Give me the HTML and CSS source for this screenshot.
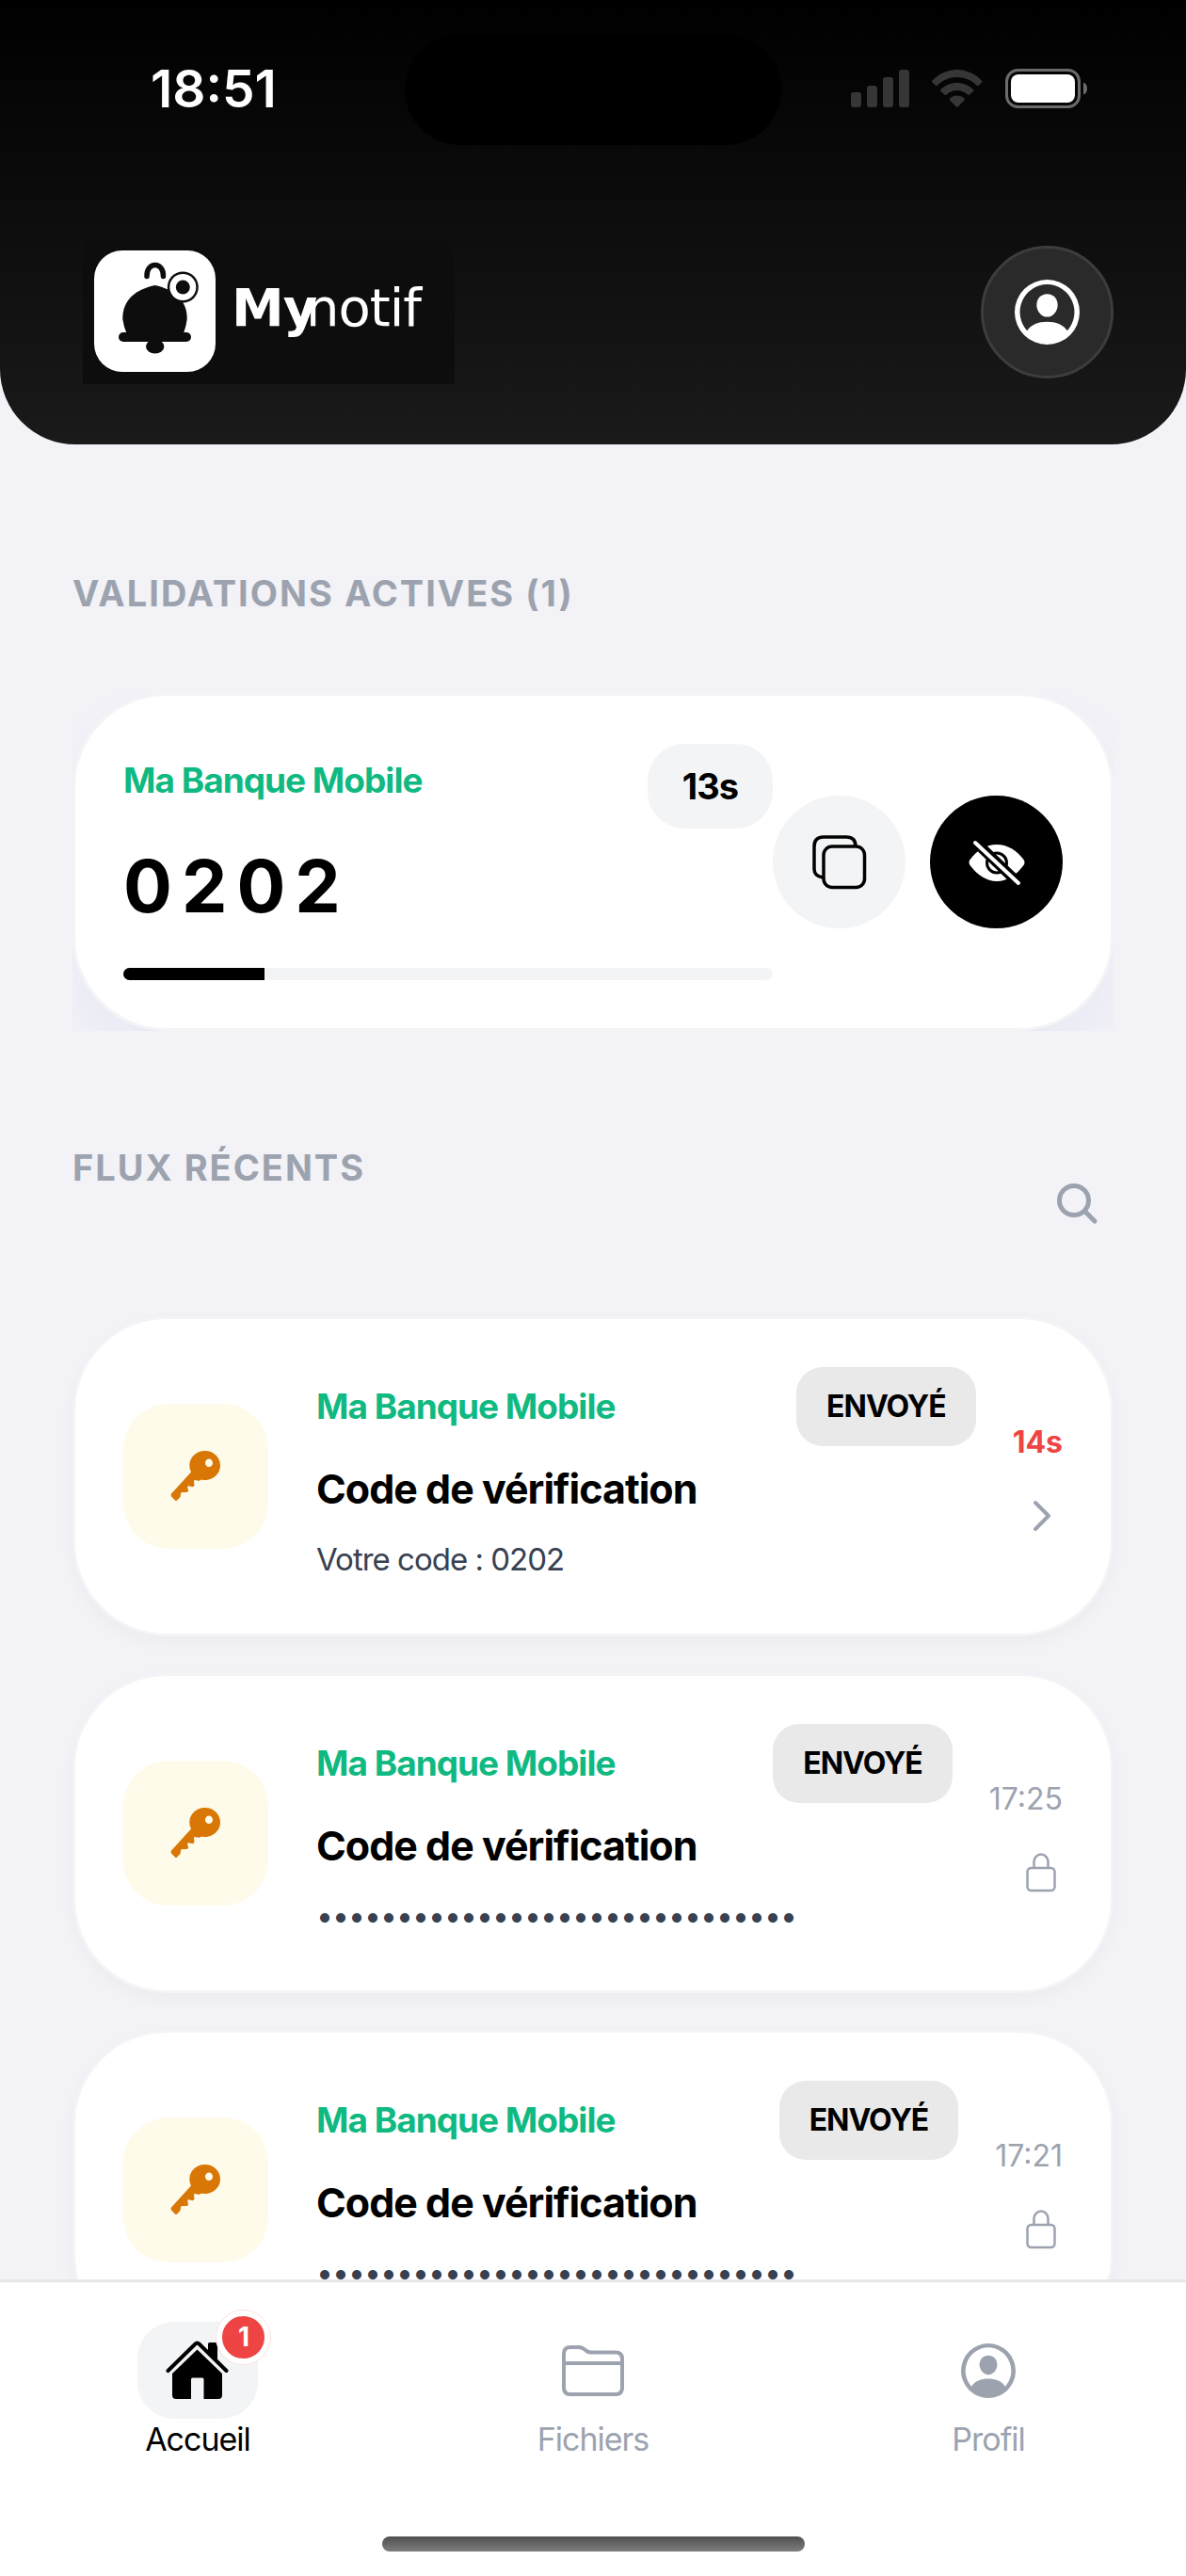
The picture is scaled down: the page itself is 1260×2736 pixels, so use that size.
FILE: index.html
```html
<!DOCTYPE html>
<html lang="fr">
<head>
    <meta charset="UTF-8" />
    <meta name="viewport" content="width=device-width, initial-scale=1.0" />
    <title>Mynotif</title>
    <link rel="stylesheet" href="styles.css">
</head>
<body>
    <!-- icônes partagées -->
    <svg class="sprite" aria-hidden="true">
        <symbol id="icon-profile" viewBox="0 0 68 68">
            <path fill-rule="evenodd" fill="currentColor" d="M34 0a34 34 0 1 1 0 68a34 34 0 1 1 0-68zM34 5a29 29 0 0 0-21 48.500C17 47 25 44 34 44s17 3 21 9.500A29 29 0 0 0 34 5z" />
            <path fill="currentColor" d="M34 15c6.500 0 11 5 11 11.500S40 39 34 39s-11-6-11-12.500S27.500 15 34 15z" />
        </symbol>
        <symbol id="icon-key" viewBox="0 0 54 54">
            <path fill-rule="evenodd" fill="currentColor" d="M37 0a16 15.500 0 1 1-4 30.500c-1 .5-1.500 1.500-3 1.200l-4-.7c-1 0-1 1-1 2l.5 3c0 1.500-1.500 2.500-3 2l-3-.8c-1 0-1.500 1-1.300 1.800l.8 2.500c.3 1.500-1 2.500-2 2.500h-4c-1.500 0-2 .8-2 2l-.5 3l-3.500 3.500q-1 1-2 0l-3.500-3.500q-1.500-1.500-.5-3.500L22 22.500A16 15.500 0 0 1 37 0zM41 8.500a4 4.300 0 1 0 0 8.600a4 4.300 0 1 0 0-8.600z" />
        </symbol>
        <symbol id="icon-lock" viewBox="0 0 46 46">
            <g fill="none" stroke="currentColor" stroke-width="2.500">
                <rect x="8.500" y="18" width="29" height="24" rx="4" />
                <path d="M15.500 18v-6.500a7.500 8 0 0 1 15 0V18" />
            </g>
        </symbol>
    </svg>

    <div class="app">
        <header class="header">
            <div class="status">
                <span class="status-time">18:51</span>
                <span class="island"></span>
                <svg class="status-icons" viewBox="0 0 255 42" aria-hidden="true">
                    <g fill="#363636">
                        <rect x="0" y="25" width="11" height="16" rx="3" />
                        <rect x="17" y="18" width="11" height="23" rx="3" />
                        <rect x="34" y="9" width="11" height="32" rx="3" />
                        <rect x="51" y="1" width="11" height="40" rx="3" />
                        <path d="M86.500 12.500C101 -3 124.500 -3 139 12.500Q140 13.500 139 14.500L135.500 18Q134.500 18.500 133.500 17.500C122 6 103.500 6 92 17.500Q91 18.500 90 18L86.500 14.500Q85.500 13.500 86.500 12.500z" />
                        <path d="M95.500 22C105 12.500 120.500 12.500 130 22Q131 23 130 24L126 27.500Q125 28.500 124 27.500C117.500 21.500 108 21.500 101.500 27.500Q100.500 28.500 99.500 27.500L95.500 24Q94.500 23 95.500 22z" />
                        <path d="M105 31.500C109.500 27.500 116 27.500 120.500 31.500Q121 32.500 120.500 33.500L113.500 40.500Q112.800 41 112 40.500L105 33.500Q104.500 32.500 105 31.500z" />
                    </g>
                    <rect x="165.500" y="1.500" width="77" height="39" rx="12" fill="none" stroke="#6b6b6b" stroke-width="3" />
                    <rect x="170" y="6" width="68" height="30" rx="8" fill="#fff" />
                    <path d="M247 14.500q4 1.500 4 6.500t-4 6.500z" fill="#6b6b6b" />
                </svg>
            </div>
            <div class="brand-row">
                <svg class="logo" viewBox="0 0 395 153" role="img" aria-label="Mynotif">
                    <rect width="395" height="153" fill="#0d0d0d" />
                    <rect x="12" y="11" width="129" height="129" rx="30" fill="#fff" />
                    <path d="M68 38.500C67.500 22.500 86 22.500 85.500 38.500" fill="none" stroke="#0d0d0d" stroke-width="5.500" stroke-linecap="round" />
                    <path d="M76.700 48C58 52 42 62 42.300 84Q43.500 92 46.500 99H107Q110 91 110.700 84C111 62 95 52 76.700 48z" fill="#0d0d0d" />
                    <rect x="38" y="98" width="77" height="10" rx="5" fill="#0d0d0d" />
                    <ellipse cx="76.700" cy="113" rx="9.700" ry="7.500" fill="#0d0d0d" />
                    <circle cx="106.300" cy="50" r="16.500" fill="#0d0d0d" />
                    <circle cx="106.300" cy="50" r="14" fill="#fff" />
                    <circle cx="106.300" cy="50" r="7.500" fill="#0d0d0d" />
                    <text class="logo-bold" x="158" y="91">My</text>
                    <text class="logo-light" x="237" y="91">notif</text>
                </svg>
                <button class="avatar" type="button" aria-label="Profil">
                    <svg><use href="#icon-profile" /></svg>
                </button>
            </div>
        </header>

        <main>
            <section>
                <h2>VALIDATIONS ACTIVES (1)</h2>
                <div class="validation-clip">
                    <article class="validation">
                        <div class="validation-body">
                            <div class="validation-head">
                                <span class="sender">Ma Banque Mobile</span>
                                <span class="timer">13s</span>
                            </div>
                            <p class="code">0202</p>
                            <div class="progress"><div class="progress-bar" style="width: 21.8%"></div></div>
                        </div>
                        <div class="validation-actions">
                            <button class="round" type="button" aria-label="Copier">
                                <svg viewBox="0 0 58 58">
                                    <g fill="none" stroke="#000" stroke-width="3.500">
                                        <path d="M11 45C5 44 2 41 2 36V12Q2 2 12 2H36Q46 2 46 12" />
                                        <rect x="12" y="12" width="43.500" height="43.500" rx="9" />
                                    </g>
                                </svg>
                            </button>
                            <button class="round round-dark" type="button" aria-label="Masquer">
                                <svg viewBox="0 0 62 62">
                                    <path d="M2.500 28C10 18 20 12 31 12s21 6 28.500 16q2 3 0 6C52 44 42 51 31 51S10 44 2.500 34q-2-3 0-6z" fill="#fff" />
                                    <circle cx="31" cy="31.500" r="10.500" fill="#fff" stroke="#000" stroke-width="3" />
                                    <path d="M8 9L54 53" stroke="#000" stroke-width="11" />
                                    <path d="M8 10L54 53" stroke="#fff" stroke-width="4" stroke-linecap="round" />
                                </svg>
                            </button>
                        </div>
                    </article>
                </div>
            </section>

            <section>
                <div class="feed-head">
                    <h2>FLUX RÉCENTS</h2>
                    <button class="search" type="button" aria-label="Rechercher">
                        <svg viewBox="0 0 44 44">
                            <g fill="none" stroke="#9ca3af" stroke-width="5" stroke-linecap="round">
                                <circle cx="18" cy="18" r="15.500" />
                                <path d="M29.500 29.500L40 40" />
                            </g>
                        </svg>
                    </button>
                </div>
                <div class="feed">
                    <article class="item">
                        <div class="item-icon"><svg><use href="#icon-key" /></svg></div>
                        <div class="item-body">
                            <div class="item-head">
                                <span class="sender">Ma Banque Mobile</span>
                                <span class="badge">ENVOYÉ</span>
                            </div>
                            <h3>Code de vérification</h3>
                            <p>Votre code : 0202</p>
                        </div>
                        <div class="item-side">
                            <time class="urgent">14s</time>
                            <svg viewBox="0 0 46 46"><path d="M17 9l14 14l-14 14" fill="none" stroke="currentColor" stroke-width="4" stroke-linecap="round" stroke-linejoin="round" /></svg>
                        </div>
                    </article>
                    <article class="item">
                        <div class="item-icon"><svg><use href="#icon-key" /></svg></div>
                        <div class="item-body">
                            <div class="item-head">
                                <span class="sender">Ma Banque Mobile</span>
                                <span class="badge">ENVOYÉ</span>
                            </div>
                            <h3>Code de vérification</h3>
                            <p class="masked">••••••••••••••••••••••••••••••</p>
                        </div>
                        <div class="item-side">
                            <time>17:25</time>
                            <svg><use href="#icon-lock" /></svg>
                        </div>
                    </article>
                    <article class="item">
                        <div class="item-icon"><svg><use href="#icon-key" /></svg></div>
                        <div class="item-body">
                            <div class="item-head">
                                <span class="sender">Ma Banque Mobile</span>
                                <span class="badge">ENVOYÉ</span>
                            </div>
                            <h3>Code de vérification</h3>
                            <p class="masked">••••••••••••••••••••••••••••••</p>
                        </div>
                        <div class="item-side">
                            <time>17:21</time>
                            <svg><use href="#icon-lock" /></svg>
                        </div>
                    </article>
                </div>
            </section>
        </main>

        <nav class="tabs">
            <a class="tab active" href="#accueil">
                <span class="tab-icon">
                    <svg class="icon-home" viewBox="0 0 68 66">
                        <path d="M45 4.500q0-1.500 1.500-1.500h7q1.500 0 1.500 1.500V23L45 14z" fill="currentColor" />
                        <path d="M2.500 33L31.500 4.500q2-2 4 0L64.500 33" fill="none" stroke="currentColor" stroke-width="4" stroke-linecap="round" />
                        <path d="M33.500 10.500L60 36V59q0 4-4 4H40.500V42q0-1.500-1.500-1.500H28.500q-1.500 0-1.500 1.500V63H11q-4 0-4-4V36z" fill="currentColor" />
                    </svg>
                    <span class="count">1</span>
                </span>
                Accueil
            </a>
            <a class="tab" href="#fichiers">
                <span class="tab-icon">
                    <svg class="icon-folder" viewBox="0 0 68 56">
                        <g fill="none" stroke="currentColor" stroke-width="4">
                            <path d="M3 10Q3 3 10 3H19Q22 3 24.500 5L26.500 6.500Q28.500 8.500 32 8.500H58Q65 8.500 65 15.500V46Q65 53 58 53H10Q3 53 3 46z" />
                            <path d="M3 20H65" />
                        </g>
                    </svg>
                </span>
                Fichiers
            </a>
            <a class="tab" href="#profil">
                <span class="tab-icon">
                    <svg class="icon-user"><use href="#icon-profile" /></svg>
                </span>
                Profil
            </a>
            <span class="home-indicator"></span>
        </nav>
    </div>
</body>
</html>
```
FILE: styles.css
```css
* {
    box-sizing: border-box;
}

body {
    margin: 0;
    background-color: #f2f2f7;
    font-family: Inter, "Liberation Sans", sans-serif;
    color: #000;
}

h2, h3, p {
    margin: 0;
}

button {
    padding: 0;
    border: none;
    background: none;
    font: inherit;
}

.sprite {
    position: absolute;
    width: 0;
    height: 0;
}

.app {
    display: flex;
    flex-direction: column;
    height: 100vh;
}

.header {
    flex: none;
    padding: 36px 77px 64px;
    border-radius: 0 0 80px 80px;
    background: linear-gradient(#000, #1a1a1a);
}

.status {
    display: grid;
    grid-template-columns: 1fr 400px 1fr;
    align-items: start;
    height: 219px;
}

.status-time {
    padding: 28px 0 0 83px;
    font-size: 55px;
    font-weight: 600;
    line-height: 60px;
    color: #fff;
}

.island {
    height: 118px;
    border-radius: 59px;
    background-color: #000;
}

.status-icons {
    width: 255px;
    height: 42px;
    margin-top: 37px;
    margin-left: 74px;
}

.brand-row {
    display: flex;
    justify-content: space-between;
    align-items: center;
}

.logo {
    width: 395px;
    height: 153px;
    margin-left: 11px;
}

.logo text {
    font-family: "DejaVu Sans", sans-serif;
    font-size: 56px;
    letter-spacing: -1px;
    fill: #fff;
}

.logo .logo-bold {
    font-weight: 700;
}

.avatar {
    display: grid;
    place-items: center;
    width: 141px;
    height: 141px;
    border: 3px solid #3d3d3d;
    border-radius: 50%;
    background-color: #2a2a2a;
    color: #fff;
}

.avatar svg {
    width: 69px;
    height: 69px;
}

main {
    flex: 1;
    min-height: 0;
    overflow: hidden;
    padding: 132px 77px 0;
}

h2 {
    font-size: 38px;
    font-weight: 700;
    line-height: 52px;
    letter-spacing: 2px;
    color: #9ca3af;
}

.sender {
    font-size: 37px;
    font-weight: 700;
    line-height: 52px;
    letter-spacing: -1px;
    color: #10b981;
}

/* l'ombre est coupée au rectangle de la carte */
.validation-clip {
    margin-top: 80px;
    overflow: hidden;
}

.validation {
    display: flex;
    align-items: center;
    padding: 51px;
    border: 3px solid #f3f4f6;
    border-radius: 100px;
    background-color: #fff;
    box-shadow: 0 30px 60px rgba(99, 102, 241, 0.06);
}

.validation-body {
    flex: 1;
}

.validation-head {
    display: flex;
    justify-content: space-between;
    align-items: flex-start;
}

.validation-head .sender {
    margin-top: 13px;
}

.timer {
    padding: 20px 37px;
    border-radius: 39px;
    background-color: #f3f4f6;
    font-size: 38px;
    font-weight: 700;
    line-height: 50px;
    letter-spacing: -1px;
}

.code {
    margin-top: 16px;
    font-size: 77px;
    font-weight: 700;
    line-height: 90px;
    letter-spacing: 10px;
}

.progress {
    height: 13px;
    margin-top: 42px;
    border-radius: 7px;
    overflow: hidden;
    background-color: #f3f4f6;
}

.progress-bar {
    height: 100%;
    background-color: #000;
}

.validation-actions {
    display: flex;
    gap: 26px;
}

.round {
    display: grid;
    place-items: center;
    width: 141px;
    height: 141px;
    border-radius: 50%;
    background-color: #f3f4f6;
}

.round svg {
    width: 58px;
    height: 58px;
}

.round-dark {
    background-color: #000;
}

.round-dark svg {
    width: 62px;
    height: 62px;
}

.feed-head {
    display: flex;
    justify-content: space-between;
    margin-top: 119px;
}

.search {
    width: 44px;
    height: 44px;
    margin: 43px 16px 0 0;
}

.search svg {
    display: block;
    width: 44px;
    height: 44px;
}

.feed {
    display: flex;
    flex-direction: column;
    gap: 39px;
    margin-top: 97px;
}

.item {
    display: flex;
    align-items: center;
    padding: 51px;
    border: 3px solid #f3f4f6;
    border-radius: 100px;
    background-color: #fff;
    box-shadow: 0 6px 18px rgba(0, 0, 0, 0.03);
}

.item-icon {
    display: grid;
    place-items: center;
    flex: none;
    width: 154px;
    height: 154px;
    border-radius: 48px;
    background-color: #fffbea;
    color: #d97706;
}

.item-icon svg {
    width: 54px;
    height: 54px;
}

.item-body {
    flex: 1;
    min-width: 0;
    margin-left: 51px;
}

.item-head {
    display: flex;
    justify-content: space-between;
    align-items: center;
}

.badge {
    padding: 16px 32px;
    border-radius: 28px;
    background-color: #e9e9e9;
    font-size: 32px;
    font-weight: 700;
    line-height: 52px;
    letter-spacing: -1px;
}

h3 {
    margin-top: 20px;
    font-size: 43px;
    font-weight: 700;
    line-height: 50px;
    letter-spacing: -1px;
}

.item-body p {
    margin-top: 24px;
    padding-bottom: 2px;
    font-size: 33px;
    line-height: 52px;
    letter-spacing: -1px;
    color: #374151;
}

.item-body .masked {
    font-size: 32px;
}

.item-side {
    display: flex;
    flex-direction: column;
    align-items: flex-end;
    gap: 26px;
    margin-left: 39px;
    color: #9ca3af;
}

.item-side time {
    font-size: 32px;
    line-height: 58px;
}

.item-side .urgent {
    font-weight: 700;
    color: #ef4444;
}

.item-side svg {
    width: 46px;
    height: 46px;
}

.tabs {
    display: grid;
    grid-template-columns: repeat(3, 1fr);
    flex: none;
    padding: 42px 0 26px;
    border-top: 3px solid #e5e7eb;
    background-color: #fff;
}

.tab {
    display: flex;
    flex-direction: column;
    align-items: center;
    font-size: 34px;
    line-height: 44px;
    letter-spacing: -1px;
    text-decoration: none;
    color: #9ca3af;
}

.tab.active {
    color: #000;
}

.tab-icon {
    position: relative;
    display: grid;
    place-items: center;
    width: 128px;
    height: 103px;
    border-radius: 39px;
}

.active .tab-icon {
    background-color: #f3f4f6;
}

.icon-home {
    width: 68px;
    height: 66px;
}

.icon-folder {
    width: 68px;
    height: 56px;
}

.icon-user {
    width: 58px;
    height: 58px;
}

.count {
    position: absolute;
    top: -12px;
    right: -13px;
    width: 57px;
    height: 57px;
    border: 6px solid #fff;
    border-radius: 50%;
    background-color: #ef4444;
    box-shadow: 0 0 0 1px #fde0e0;
    font-size: 28px;
    font-weight: 700;
    line-height: 45px;
    text-align: center;
    color: #fff;
}

.home-indicator {
    grid-column: 1 / -1;
    justify-self: center;
    width: 449px;
    height: 16px;
    margin-top: 81px;
    border-radius: 8px;
    background: linear-gradient(#505050, #7d7d7d);
}
```
